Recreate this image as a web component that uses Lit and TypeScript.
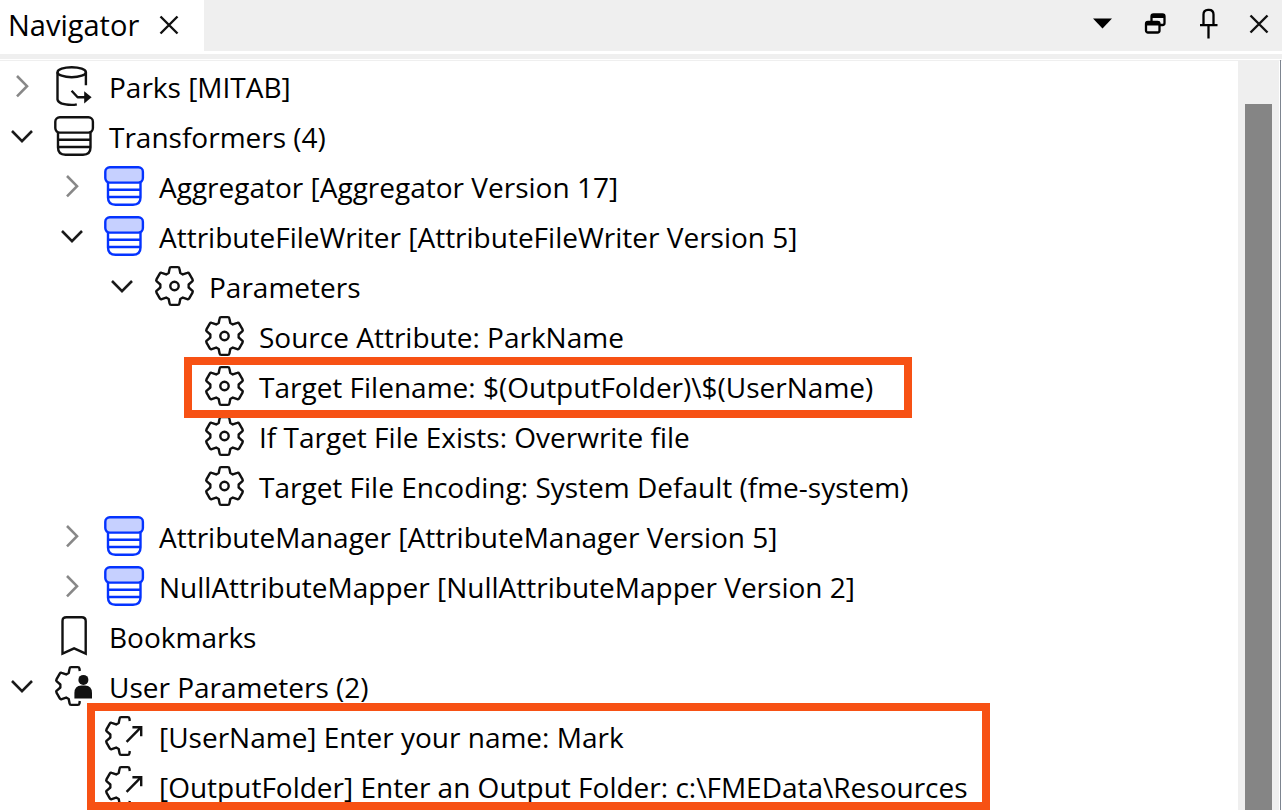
import { LitElement, html, svg, css, nothing, TemplateResult } from "lit";
import { customElement, property, state } from "lit/decorators.js";
import { classMap } from "lit/directives/class-map.js";

type IconName = "reader" | "stack" | "transformer" | "gear" | "bookmark" | "user" | "published";

interface TreeNode {
  label: string;
  icon: IconName;
  open?: boolean;
  expandable?: boolean;
  mark?: "row" | "children";
  children?: TreeNode[];
}

const TREE: TreeNode[] = [
  { label: "Parks [MITAB]", icon: "reader", expandable: true },
  {
    label: "Transformers (4)",
    icon: "stack",
    open: true,
    children: [
      { label: "Aggregator [Aggregator Version 17]", icon: "transformer", expandable: true },
      {
        label: "AttributeFileWriter [AttributeFileWriter Version 5]",
        icon: "transformer",
        open: true,
        children: [
          {
            label: "Parameters",
            icon: "gear",
            open: true,
            children: [
              { label: "Source Attribute: ParkName", icon: "gear" },
              { label: "Target Filename: $(OutputFolder)\\$(UserName)", icon: "gear", mark: "row" },
              { label: "If Target File Exists: Overwrite file", icon: "gear" },
              { label: "Target File Encoding: System Default (fme-system)", icon: "gear" },
            ],
          },
        ],
      },
      { label: "AttributeManager [AttributeManager Version 5]", icon: "transformer", expandable: true },
      { label: "NullAttributeMapper [NullAttributeMapper Version 2]", icon: "transformer", expandable: true },
    ],
  },
  { label: "Bookmarks", icon: "bookmark" },
  {
    label: "User Parameters (2)",
    icon: "user",
    open: true,
    mark: "children",
    children: [
      { label: "[UserName] Enter your name: Mark", icon: "published" },
      { label: "[OutputFolder] Enter an Output Folder: c:\\FMEData\\Resources", icon: "published" },
    ],
  },
];

// Rotates a point about the gear centre and formats it for a path.
function at(x: number, y: number, turn: number): string {
  const a = (turn * Math.PI) / 3;
  const px = 20.5 + x * Math.cos(a) - y * Math.sin(a);
  const py = 20 + x * Math.sin(a) + y * Math.cos(a);
  return `${px.toFixed(2)} ${py.toFixed(2)}`;
}

// The outer end of one tooth, clockwise, with softened corners.
function tip(turn: number): string {
  return `L${at(-4.9, -17.6, turn)} Q${at(-4.7, -18.9, turn)} ${at(-3.3, -18.9, turn)} L${at(3.3, -18.9, turn)} Q${at(4.7, -18.9, turn)} ${at(4.9, -17.6, turn)}`;
}

function tooth(turn: number): string {
  return `L${at(-5.8, -13, turn)} ${tip(turn)} L${at(5.8, -13, turn)}`;
}

const GEAR = `M${[0, 1, 2, 3, 4, 5].map(tooth).join(" ").slice(1)} Z`;

// Left half only, running from the bottom tooth round to the top one.
const HALF_GEAR = `M${at(-5.3, -15, 3)} ${tip(3)} L${at(5.8, -13, 3)} ${tooth(4)} ${tooth(5)} L${at(-5.8, -13, 0)} ${tip(0)} L${at(5.3, -15, 0)}`;

const stackShape = svg`
  <path d="M4 16.5V31.5Q4 38.7 11.5 38.7H29Q36.5 38.7 36.5 31.5V16.5" />
  <path d="M4 23.7H36.5M4 31H36.5" />
  <rect class="cap" x="1.3" y="1.2" width="37.6" height="15.4" rx="4.5" />`;

const ICONS: Record<IconName, TemplateResult> = {
  reader: svg`
    <ellipse cx="17.7" cy="6.2" rx="14.2" ry="5" />
    <path d="M3.5 6.2V33.6Q4.5 38.8 17.5 38.9Q20.5 38.9 22.8 38.3" />
    <path d="M31.9 6.2V19.3M17.6 24.8L23.6 31.2H32" />
    <path class="solid" d="M30.2 25.2L37.6 31.2L30.2 37.4Z" />`,
  stack: stackShape,
  transformer: stackShape,
  gear: svg`<path d=${GEAR} /><circle cx="20.5" cy="20" r="4.2" />`,
  bookmark: svg`<path class="sharp" d="M8.5 37.6V5Q8.5 1.2 12.5 1.2H27.7Q31.7 1.2 31.7 5V37.6L20.1 32.3Z" />`,
  user: svg`
    <path d=${HALF_GEAR} />
    <circle class="solid" cx="29.4" cy="13.9" r="5" />
    <path class="solid" d="M20.4 32.4V27Q20.4 19.4 27.5 19.4H31Q38 19.4 38 27V32.4Z" />`,
  published: svg`
    <path d=${HALF_GEAR} />
    <path class="sharp" d="M22.6 25.8L36.6 11.6M28.4 11.2H37.2V20.2" />`,
};

@customElement("nav-node")
class NavNode extends LitElement {
  @property({ attribute: false }) node!: TreeNode;
  @state() private open = false;

  static styles = css`
    :host {
      display: block;
      position: relative;
    }
    .row {
      display: flex;
      align-items: center;
      height: 50px;
      padding-left: 10px;
      white-space: nowrap;
    }
    .toggle {
      display: flex;
      flex: none;
      width: 24px;
      height: 24px;
      margin: 0 20px 2px 0;
      padding: 0;
      border: 0;
      background: none;
      color: #1a1a1a;
    }
    .toggle.closed {
      color: #888;
    }
    .chevron {
      width: 24px;
      height: 24px;
      fill: none;
      stroke: currentColor;
      stroke-width: 2.6;
    }
    .icon {
      flex: none;
      width: 40px;
      height: 40px;
      margin: 0 15px 2px 0;
      fill: none;
      stroke: #111;
      stroke-width: 2.4;
      stroke-linejoin: round;
      overflow: visible;
    }
    .icon .solid {
      fill: #111;
      stroke: none;
    }
    .icon .sharp {
      stroke-linejoin: miter;
    }
    .icon.transformer {
      stroke: #0433ff;
    }
    .icon.transformer .cap {
      fill: #c6d0ff;
    }
    .children {
      position: relative;
      padding-left: 50px;
    }
    .mark {
      position: absolute;
      box-sizing: border-box;
      border: 8px solid #f75114;
      pointer-events: none;
      z-index: 1;
    }
    .mark.around-row {
      top: -5px;
      left: 34px;
      width: 728px;
      height: 61px;
    }
    .mark.around-children {
      top: -9px;
      bottom: 2px;
      left: 87px;
      width: 903px;
    }
  `;

  willUpdate(changed: Map<string, unknown>) {
    if (changed.has("node")) this.open = !!this.node.open;
  }

  render() {
    const { label, icon, children, expandable, mark } = this.node;
    return html`
      <div class="row">
        ${children || expandable
          ? html`<button
              class=${classMap({ toggle: true, closed: !this.open })}
              aria-label=${label}
              aria-expanded=${this.open ? "true" : "false"}
              @click=${() => (this.open = !this.open)}
            >
              <svg class="chevron" viewBox="0 0 24 24">
                <path d=${this.open ? "M2 7L12 17.2L22 7" : "M7 2L17 12.2L7 22.4"} />
              </svg>
            </button>`
          : html`<span class="toggle"></span>`}
        <svg class="icon ${icon}" viewBox="0 0 40 40" aria-hidden="true">${ICONS[icon]}</svg>
        <span>${label}</span>
      </div>
      ${mark === "row" ? html`<div class="mark around-row"></div>` : nothing}
      ${children && this.open
        ? html`<div class="children" role="group">
            ${children.map((c) => html`<nav-node role="treeitem" .node=${c}></nav-node>`)}
            ${mark === "children" ? html`<div class="mark around-children"></div>` : nothing}
          </div>`
        : nothing}
    `;
  }
}

@customElement("app-root")
class AppRoot extends LitElement {
  static styles = css`
    :host {
      display: flex;
      flex-direction: column;
      height: 100vh;
      overflow: hidden;
      background: #fff;
      color: #000;
      font: 28px/38px "Open Sans", "Noto Sans", sans-serif;
    }
    .header {
      display: flex;
      justify-content: space-between;
      flex: none;
      height: 51px;
      background: #efefef;
    }
    .tab {
      display: flex;
      align-items: center;
      gap: 20px;
      box-sizing: border-box;
      width: 204px;
      padding: 0 0 2px 8px;
      background: #fff;
      font-size: 29px;
    }
    .tools {
      display: flex;
      align-items: center;
      gap: 28px;
      padding: 0 13px 4px 0;
    }
    .tool {
      display: flex;
      padding: 0;
      border: 0;
      background: none;
    }
    .glyph {
      width: 25px;
      height: 32px;
      fill: none;
      stroke: #000;
      stroke-width: 2.3;
    }
    .glyph .solid {
      fill: #000;
      stroke: none;
    }
    .glyph .bar {
      stroke-width: 4;
    }
    .cross {
      width: 20px;
      height: 20px;
      fill: none;
      stroke: #111;
      stroke-width: 2.4;
    }
    .band {
      flex: none;
      height: 5px;
      margin: 3px 0 1px;
      background: #efefef;
    }
    .body {
      display: flex;
      flex: 1;
      min-height: 0;
      padding-right: 3px;
      border-top: 1px solid #efefef;
      position: relative;
    }
    .tree {
      flex: 1;
      min-width: 0;
      padding-top: 1px;
    }
    .scrollbar {
      flex: none;
      box-sizing: border-box;
      width: 41px;
      padding: 43px 7px 0;
      background: #efefef;
    }
    .thumb {
      width: 27px;
      height: 100%;
      background: #858585;
    }
    .edge {
      position: absolute;
      top: -1px;
      right: 1px;
      bottom: 0;
      width: 1px;
      background: #7d8590;
    }
  `;

  render() {
    const cross = html`<svg class="cross" viewBox="0 0 20 20"><path d="M1.5 1.5L18.5 18.5M18.5 1.5L1.5 18.5" /></svg>`;
    return html`
      <div class="header">
        <div class="tab">
          <span>Navigator</span>
          <button class="tool" aria-label="Close tab">${cross}</button>
        </div>
        <div class="tools">
          <button class="tool" aria-label="Menu">
            <svg class="glyph" viewBox="0 0 25 32"><path class="solid" d="M3 10.5H22L12.5 20.5Z" /></svg>
          </button>
          <button class="tool" aria-label="Float">
            <svg class="glyph" viewBox="0 0 25 32">
              <path d="M8.5 14V8.5Q8.5 6.5 10.5 6.5H19.5Q21.5 6.5 21.5 8.5V15Q21.5 17 19.5 17H17" />
              <path class="bar" d="M8.5 8H21.5" />
              <rect x="3" y="14" width="13.5" height="10.5" rx="2" />
              <path class="bar" d="M3 15.5H16.5" />
            </svg>
          </button>
          <button class="tool" aria-label="Pin">
            <svg class="glyph" viewBox="0 0 25 32">
              <path d="M7.5 17V6.5Q7.5 1.8 12 1.8H13Q17.5 1.8 17.5 6.5V17M4 17.2H21.5M12.5 17V30.5" />
            </svg>
          </button>
          <button class="tool" aria-label="Close">${cross}</button>
        </div>
      </div>
      <div class="band"></div>
      <div class="body">
        <div class="tree" role="tree" aria-label="Navigator">
          ${TREE.map((n) => html`<nav-node role="treeitem" .node=${n}></nav-node>`)}
        </div>
        <div class="scrollbar"><div class="thumb"></div></div>
        <div class="edge"></div>
      </div>
    `;
  }
}
